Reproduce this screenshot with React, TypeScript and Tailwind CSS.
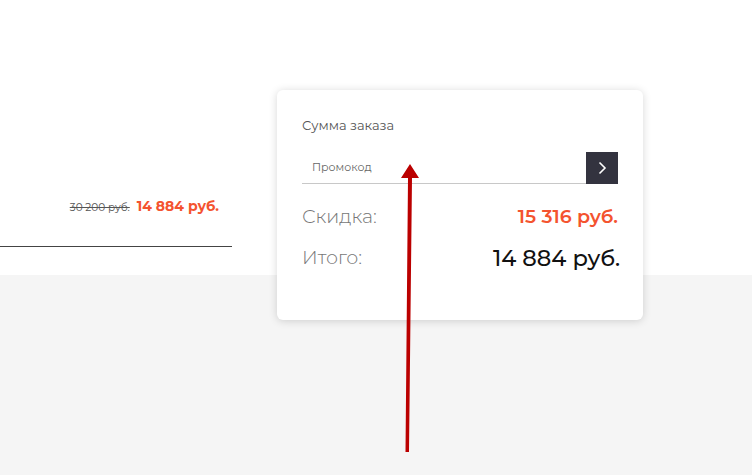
import React from 'react';

const font = { fontFamily: 'Montserrat, "Open Sans", "Liberation Sans", sans-serif' };

const Arrow = () => (
  <svg className="absolute left-0 top-0 pointer-events-none" width="752" height="475" viewBox="0 0 752 475">
    <polygon points="405.5,452 409,452 412,178 419,178 410,164 401,178 408,178" fill="#bb0000" />
  </svg>
);

export default function App() {
  return (
    <div
      className="relative w-[752px] h-[475px] overflow-hidden bg-[linear-gradient(to_bottom,#ffffff_275px,#f5f5f5_275px)]"
      style={font}
    >
      <div className="flex pt-[90px]">
        <div className="w-[232px] flex flex-col pt-[106px]">
          <div className="flex items-baseline justify-end gap-[7px] pr-[13px] h-[50px]">
            <span className="text-[10.5px] text-[#555] line-through">30 200 руб.</span>
            <span className="text-[14px] font-bold text-[#f4532f]">14 884 руб.</span>
          </div>
          <div className="border-b border-[#444]" />
        </div>
        <div className="ml-[45px] w-[366px] h-[230px] rounded-[6px] bg-white shadow-[0_1px_8px_rgba(0,0,0,0.16)] px-[25px] pt-[26px]">
          <div className="text-[13px] text-[#555]">Сумма заказа</div>
          <div className="mt-[16px] flex items-center h-[32px] border-b border-[#c8c8c8]">
            <span className="flex-1 pl-[10px] text-[11px] text-[#666]">Промокод</span>
            <button className="w-[32px] h-[32px] bg-[#33333f] flex items-center justify-center self-start">
              <svg width="12" height="14" viewBox="0 0 12 14" fill="none">
                <path d="M3.5 1.5 L9 7 L3.5 12.5" stroke="#fff" strokeWidth="1.6" />
              </svg>
            </button>
          </div>
          <div className="mt-[20px] flex items-center justify-between h-[28px]">
            <span className="text-[19px] font-light text-[#777]">Скидка:</span>
            <span className="text-[19px] font-semibold text-[#f4532f]">15 316 руб.</span>
          </div>
          <div className="mt-[12px] flex items-center justify-between h-[30px]">
            <span className="text-[19px] font-light text-[#777]">Итого:</span>
            <span className="text-[22.5px] font-medium text-[#111] -mr-[2px]">14 884 руб.</span>
          </div>
        </div>
      </div>
      <Arrow />
    </div>
  );
}
